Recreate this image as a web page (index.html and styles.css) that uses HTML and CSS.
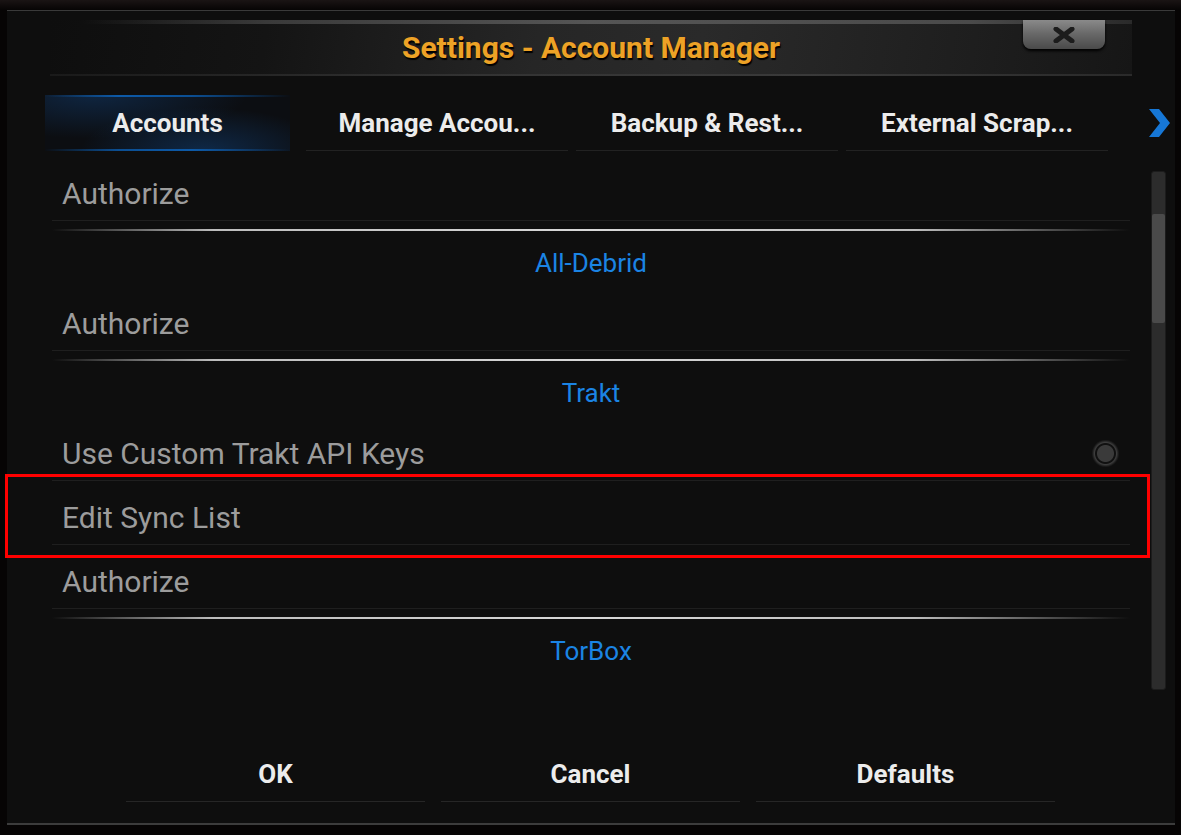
FILE: index.html
```html
<!DOCTYPE html>
<html lang="en">

<head>
    <meta charset="UTF-8">
    <title>Settings - Account Manager</title>
    <link rel="stylesheet" href="styles.css">
</head>

<body>
    <div class="dialog">
        <div class="header">
            <h1>Settings - Account Manager</h1>
        </div>
        <div class="close-btn">
            <svg width="26" height="16" viewBox="0 0 26 16">
                <path d="M5 2 L21 14 M21 2 L5 14" stroke="#1c1c1c" stroke-width="5" stroke-linecap="round"/>
            </svg>
        </div>

        <div class="tabs">
            <div class="tab active">Accounts</div>
            <div class="tab">Manage Accou...</div>
            <div class="tab">Backup &amp; Rest...</div>
            <div class="tab">External Scrap...</div>
            <div class="tab-next">
                <svg width="24" height="30" viewBox="0 0 24 30">
                    <path d="M2 1 L12 1 L23 15 L12 29 L2 29 L13 15 Z" fill="#1677d6"/>
                </svg>
            </div>
        </div>

        <div class="content">
            <div class="list">
                <div class="row">Authorize</div>
                <div class="category">All-Debrid</div>
                <div class="row">Authorize</div>
                <div class="category">Trakt</div>
                <div class="row">
                    <span>Use Custom Trakt API Keys</span>
                    <span class="radio"></span>
                </div>
                <div class="row">Edit Sync List</div>
                <div class="row">Authorize</div>
                <div class="category">TorBox</div>
            </div>
            <div class="scrollbar">
                <div class="thumb"></div>
            </div>
        </div>

        <div class="buttons">
            <div class="button">OK</div>
            <div class="button">Cancel</div>
            <div class="button">Defaults</div>
        </div>

        <div class="highlight"></div>
    </div>
</body>

</html>
```

FILE: styles.css
```css
* {
    margin: 0;
    padding: 0;
    box-sizing: border-box;
    font-family: Roboto, "Liberation Sans", sans-serif;
}

body {
    width: 1181px;
    height: 835px;
    overflow: hidden;
    background: linear-gradient(#1a1414, #060404 10px);
    padding: 10px 6px 0 7px;
}

.dialog {
    position: relative;
    width: 1168px;
    height: 815px;
    background: #0e0e0e;
    border-top: 1px solid #3a3a3a;
    border-bottom: 2px solid #3c3c3c;
    display: flex;
    flex-direction: column;
}

/* title bar */
.header {
    margin: 9px 43px 0 43px;
    height: 56px;
    background:
        linear-gradient(90deg, transparent 3%, #3a3a3a 20%, #555 50%, #4a4a4a 85%, #2a2a2a 100%) top / 100% 4px no-repeat,
        linear-gradient(90deg, #1a1a1a, #333 40%, #3a3a3a 70%, #2a2a2a) bottom / 100% 2px no-repeat,
        linear-gradient(100deg, #0e0e0e 0%, #141414 20%, #262626 45%, #2a2a2a 60%, #1e1e1e 85%, #161616 100%);
    display: flex;
    align-items: center;
    justify-content: center;
}

.header h1 {
    font-size: 30px;
    font-weight: bold;
    color: #eda226;
    text-shadow: 1px 2px 1px #000;
    margin-top: -2px;
}

.close-btn {
    position: absolute;
    top: 9px;
    left: 1016px;
    width: 82px;
    height: 29px;
    border-radius: 0 0 8px 8px;
    background: linear-gradient(#8a8a8a, #6a6a6a 45%, #4a4a4a);
    box-shadow: 0 2px 3px #000;
    display: flex;
    align-items: center;
    justify-content: center;
}

/* tabs */
.tabs {
    margin-top: 19px;
    padding-left: 29px;
    display: flex;
    gap: 8px;
    height: 56px;
    align-items: stretch;
}

.tab {
    width: 262px;
    border-bottom: 1px solid #222;
    display: flex;
    align-items: center;
    justify-content: center;
    font-size: 26px;
    font-weight: bold;
    color: #ececec;
}

.tab.active {
    border-bottom: none;
    margin: 0 8px 0 9px;
    width: 245px;
    background:
        linear-gradient(90deg, transparent, #0d5aa8 30%, #0b4e92 60%, transparent) top / 100% 2px no-repeat,
        linear-gradient(90deg, transparent, #0b4e92 30%, #0d5aa8 60%, transparent) bottom / 100% 2px no-repeat,
        radial-gradient(ellipse at 65% 100%, rgba(20, 90, 170, 0.35), transparent 55%),
        radial-gradient(ellipse at 20% 0%, rgba(20, 80, 150, 0.35), transparent 55%),
        #0c0e12;
}

.tab-next {
    margin-left: 31px;
    display: flex;
    align-items: center;
}

/* settings list */
.content {
    display: flex;
    margin-top: 6px;
    height: 540px;
}

.list {
    margin-left: 45px;
    width: 1078px;
}

.row {
    height: 64px;
    padding: 10px 10px 0 10px;
    border-bottom: 1px solid #1f1f1f;
    display: flex;
    align-items: center;
    justify-content: space-between;
    font-size: 30px;
    color: #9c9c9c;
}

.category {
    position: relative;
    height: 66px;
    padding-top: 18px;
    display: flex;
    align-items: center;
    justify-content: center;
    font-size: 26px;
    color: #1b84e4;
}

.category::before {
    content: "";
    position: absolute;
    top: 8px;
    left: 0;
    right: 0;
    height: 2px;
    background: linear-gradient(90deg, transparent 0%, #bdbdbd 15%, #d8d8d8 50%, #bdbdbd 80%, transparent 100%);
}

.radio {
    width: 27px;
    height: 27px;
    margin-right: 1px;
    border-radius: 50%;
    background: radial-gradient(circle, #3a3a3a 0 8px, #111 9px 10px, #3d3d3d 11px, #1a1a1a 13px);
}

.scrollbar {
    margin: 14px 0 0 21px;
    width: 15px;
    height: 519px;
    background: #2c2c2c;
    border-radius: 3px;
    border: 1px solid #1c1c1c;
}

.thumb {
    margin-top: 42px;
    height: 109px;
    background: #4a4a4a;
    border-radius: 2px;
}

/* bottom buttons */
.buttons {
    margin-top: 49px;
    padding-left: 119px;
    display: flex;
    gap: 16px;
}

.button {
    width: 299px;
    height: 56px;
    border-bottom: 1px solid #262626;
    display: flex;
    align-items: center;
    justify-content: center;
    font-size: 26px;
    font-weight: bold;
    color: #ececec;
}

/* annotation box */
.highlight {
    position: absolute;
    left: -2px;
    top: 463px;
    width: 1145px;
    height: 84px;
    border: 3px solid #f00;
}
```
